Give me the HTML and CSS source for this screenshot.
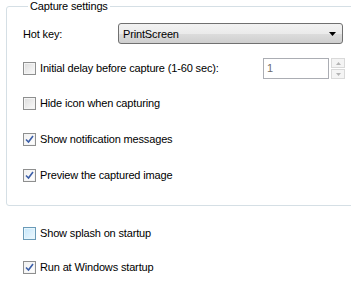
FILE: index.html
```html
<!DOCTYPE html>
<html>
<head>
    <title>Capture settings</title>
    <link rel="stylesheet" href="styles.css">
</head>
<body>

<fieldset class="group">
    <legend>Capture settings</legend>

    <div class="row hotkey-row">
        <span class="label">Hot key:</span>
        <div class="combo">
            <span>PrintScreen</span>
            <svg class="arrow" width="7" height="4" viewBox="0 0 7 4"><path d="M0 0H7L3.5 4Z" fill="#000"/></svg>
        </div>
    </div>

    <div class="row delay-row">
        <label class="check"><span class="box"></span>Initial delay before capture (1-60 sec):</label>
        <div class="spin">
            <div class="spin-text">1</div>
            <div class="spin-btns">
                <div class="spin-btn"><svg width="5" height="3" viewBox="0 0 5 3"><path d="M0 3H5L2.5 0Z" fill="#b4b4b4"/></svg></div>
                <div class="spin-btn"><svg width="5" height="3" viewBox="0 0 5 3"><path d="M0 0H5L2.5 3Z" fill="#b4b4b4"/></svg></div>
            </div>
        </div>
    </div>

    <div class="row opt-row first">
        <label class="check"><span class="box"></span>Hide icon when capturing</label>
    </div>
    <div class="row opt-row">
        <label class="check"><span class="box checked"><svg width="9" height="9" viewBox="0 0 9 9"><path d="M1 4.5L3.5 7L8 1" stroke="#3b5ea8" stroke-width="1.6" fill="none"/></svg></span>Show notification messages</label>
    </div>
    <div class="row opt-row">
        <label class="check"><span class="box checked"><svg width="9" height="9" viewBox="0 0 9 9"><path d="M1 4.5L3.5 7L8 1" stroke="#3b5ea8" stroke-width="1.6" fill="none"/></svg></span>Preview the captured image</label>
    </div>
</fieldset>

<div class="extra">
    <div class="row">
        <label class="check"><span class="box hover"></span>Show splash on startup</label>
    </div>
    <div class="row">
        <label class="check"><span class="box checked"><svg width="9" height="9" viewBox="0 0 9 9"><path d="M1 4.5L3.5 7L8 1" stroke="#3b5ea8" stroke-width="1.6" fill="none"/></svg></span>Run at Windows startup</label>
    </div>
</div>

</body>
</html>
```

FILE: styles.css
```css
/* vista style settings page */
body {
    margin: 0; background: #fff; color: #000;
    font-family: "Liberation Sans", Arial, sans-serif; font-size: 11px;
    letter-spacing: -0.15px;
    overflow: hidden; width: 351px; height: 289px;
}
.group {
    margin: 0 0 0 6px; padding: 10px 0 23px 16px;
    width: 350px; box-sizing: border-box;
    border: 1px solid #d5dfe5; border-radius: 3px;
}
.group legend { padding: 0 2px; margin-left: 5px; line-height: 13px; }
.row { display: flex; align-items: center; }
.label { width: 95px; flex-shrink: 0; }
.hotkey-row { height: 21px; }
.combo {
    width: 225px; height: 21px; box-sizing: border-box; flex-shrink: 0;
    display: flex; align-items: center; justify-content: space-between;
    padding: 0 6px 0 4px;
    border: 1px solid #707070; border-radius: 3px;
    background: linear-gradient(#f2f2f2 0%, #ebebeb 50%, #dddddd 51%, #cfcfcf 100%);
}
.delay-row { height: 21px; margin-top: 14px; justify-content: space-between; width: 322px; }
.spin { display: flex; height: 21px; }
.spin-text {
    width: 66px; box-sizing: border-box; padding: 3px 0 0 3px;
    border: 1px solid #abadb3; color: #6d6d6d;
}
.spin-btns { display: flex; flex-direction: column; margin-left: 2px; gap: 1px; }
.spin-btn {
    width: 14px; height: 10px; box-sizing: border-box;
    border: 1px solid #d9d9d9; background: #f4f4f4;
    display: flex; align-items: center; justify-content: center;
}
.opt-row { height: 13px; margin-top: 23px; }
.opt-row.first { margin-top: 18px; }
.check { display: flex; align-items: center; line-height: 13px; }
.box {
    width: 13px; height: 13px; box-sizing: border-box; margin-right: 4px;
    border: 1px solid #8e8f8f;
    background: linear-gradient(135deg, #dcdcdc, #fbfbfb);
    box-shadow: inset 0 0 0 1px #f4f4f4;
    display: flex; align-items: center; justify-content: center;
}
.box.checked { background: linear-gradient(135deg, #f0f0f0, #ffffff); }
.box.hover {
    border-color: #6a9ab8;
    background: linear-gradient(135deg, #c4e6fb, #eef8fe);
    box-shadow: inset 0 0 0 1px #e6f6fc;
}
.extra { padding: 21px 0 0 23px; }
.extra .row { height: 13px; margin-bottom: 21px; }
```
